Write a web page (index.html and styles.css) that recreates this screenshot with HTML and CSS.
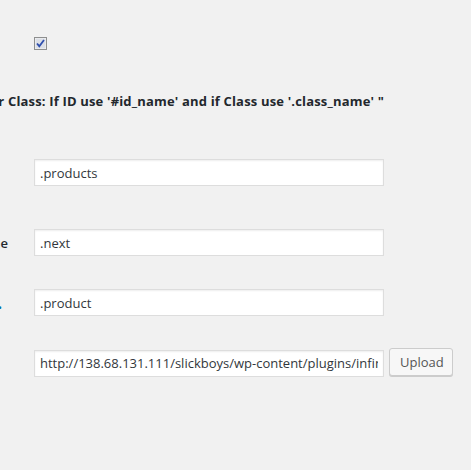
FILE: index.html
```html
<!DOCTYPE html>
<html>
<head>
<meta charset="utf-8">
<link rel="stylesheet" href="styles.css">
</head>
<body>
<div class="page">
  <div class="row row-check">
    <div class="label"></div>
    <span class="checkbox" role="checkbox" aria-checked="true">
      <svg width="13" height="13" viewBox="0 0 13 13">
        <rect x="0.5" y="0.5" width="12" height="12" fill="#f4f4f4" stroke="#8e8f8f"/>
        <rect x="1.5" y="1.5" width="10" height="10" fill="#dcdfe6"/>
        <path d="M3 6.5 L5.3 9.2 L10 3" fill="none" stroke="#2f4fae" stroke-width="1.8"/>
      </svg>
    </span>
  </div>
  <div class="heading">
    <span>Enter ID or Class: If ID use '#id_name' and if Class use '.class_name' "</span>
  </div>
  <div class="row row-1">
    <div class="label label-short">Container</div>
    <input class="field" type="text" value=".products">
  </div>
  <div class="row row-2">
    <div class="label">Next Selector Name</div>
    <input class="field" type="text" value=".next">
  </div>
  <div class="row row-3">
    <div class="label label-link">Item Selector <a href="#">.</a></div>
    <input class="field" type="text" value=".product">
  </div>
  <div class="row row-4">
    <div class="label label-short">Loader Image</div>
    <input class="field" type="text" value="http://138.68.131.111/slickboys/wp-content/plugins/infinite-scroll/images/loader.gif">
    <button class="button" type="button">Upload</button>
  </div>
</div>
</body>
</html>
```

FILE: styles.css
```css
html, body {
  margin: 0;
  padding: 0;
  background: #f1f1f1;
  overflow: hidden;
}
body {
  font-family: "Open Sans", "Noto Sans", sans-serif;
  font-size: 13px;
  color: #23282d;
  width: 471px;
  height: 470px;
}
.page {
  display: flex;
  flex-direction: column;
  padding-top: 37px;
  margin-left: -200px;
}
.row {
  display: flex;
  align-items: center;
}
.label {
  width: 234px;
  flex: none;
  box-sizing: border-box;
  text-align: right;
  padding-right: 26px;
  font-weight: 600;
  font-size: 13px;
  white-space: nowrap;
  overflow: hidden;
  color: #23282d;
}
.label-short { padding-right: 40px; }
.label-link { padding-right: 32px; color: transparent; }
.label-link a {
  color: #0073aa;
  text-decoration: none;
  font-size: 16px;
  font-weight: 700;
}
.row-check .label { height: 13px; }
.checkbox {
  display: block;
  width: 13px;
  height: 13px;
}
.checkbox svg { display: block; }
.heading {
  margin-top: 41px;
  width: 584px;
  display: flex;
  justify-content: flex-end;
  font-weight: 700;
  font-size: 13px;
  letter-spacing: 0.17px;
  line-height: 20px;
  white-space: nowrap;
  color: #23282d;
}
.field {
  width: 350px;
  height: 27px;
  box-sizing: border-box;
  border: 1px solid #ddd;
  box-shadow: inset 0 1px 2px rgba(0,0,0,.07);
  background: #fff;
  color: #32373c;
  font-family: "Open Sans", "Noto Sans", sans-serif;
  font-size: 13px;
  padding: 0 5px;
  margin: 0;
  outline: none;
}
.row-1 { margin-top: 48px; }
.row-2 { margin-top: 43px; }
.row-3 { margin-top: 33px; }
.row-4 { margin-top: 33px; }
.button {
  height: 28px;
  width: 64px;
  box-sizing: border-box;
  border: 1px solid #ccc;
  border-radius: 3px;
  background: #f7f7f7;
  box-shadow: 0 1px 0 #ccc;
  color: #555;
  font-family: "Open Sans", "Noto Sans", sans-serif;
  font-size: 13px;
  padding: 0 10px 1px;
  margin: 0 0 0 5px;
  position: relative;
  top: -1px;
}
```
